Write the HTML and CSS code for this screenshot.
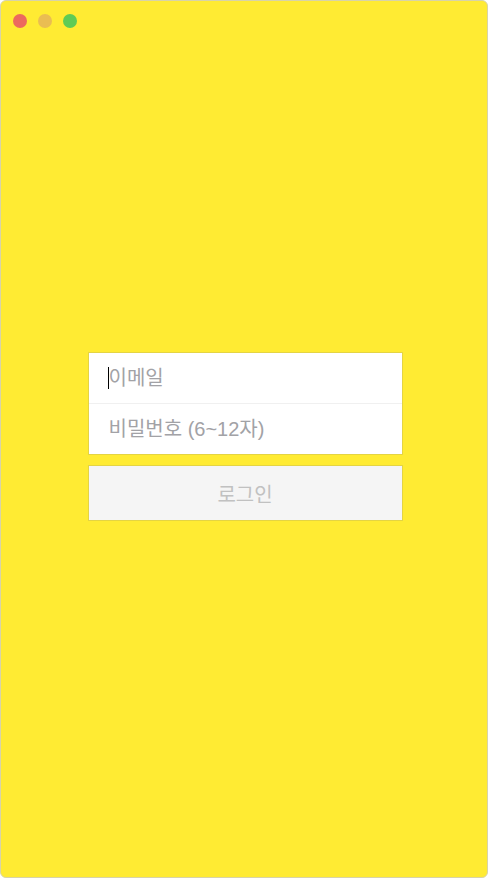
FILE: index.html
```html
<!DOCTYPE html>
<html lang="ko">
<head>
<meta charset="utf-8">
<title>로그인</title>
<link rel="stylesheet" href="styles.css">
</head>
<body>
<div class="window">
  <div class="titlebar">
    <span class="dot red"></span>
    <span class="dot yellow"></span>
    <span class="dot green"></span>
  </div>
  <main class="content">
    <form class="login">
      <div class="fields">
        <label class="field-wrap">
          <input class="field" type="email" placeholder="이메일">
          <span class="caret"></span>
        </label>
        <label class="field-wrap second">
          <input class="field" type="password" placeholder="비밀번호 (6~12자)">
        </label>
      </div>
      <button class="submit" type="button" disabled>로그인</button>
    </form>
  </main>
</div>
</body>
</html>
```
FILE: styles.css
```css
* { box-sizing: border-box; }
html, body { margin: 0; padding: 0; background: #ffffff; }
body {
  width: 488px;
  height: 878px;
  font-family: "Liberation Sans", "Noto Sans CJK KR", sans-serif;
}
.window {
  width: 488px;
  height: 878px;
  background: #ffeb33;
  border: 1px solid #d8d3a8;
  border-radius: 6px;
  display: flex;
  flex-direction: column;
  overflow: hidden;
}
.titlebar {
  display: flex;
  gap: 11px;
  padding: 13px 0 0 12px;
  height: 28px;
}
.dot {
  width: 14px;
  height: 14px;
  border-radius: 50%;
}
.red { background: #ec6a5e; }
.yellow { background: #eabd52; }
.green { background: #5fcb55; }
.content {
  flex: 1;
  display: flex;
  justify-content: center;
  padding-top: 323px;
}
.login {
  width: 315px;
  display: flex;
  flex-direction: column;
  gap: 10px;
  margin-left: 2px;
}
.fields {
  border: 1px solid #e4d443;
  background: #ffffff;
  display: flex;
  flex-direction: column;
}
.field-wrap {
  position: relative;
  display: flex;
  height: 50px;
}
.field-wrap.second {
  height: 51px;
  border-top: 1px solid #f0f0f0;
}
.field {
  flex: 1;
  width: 100%;
  border: 0;
  outline: none;
  padding: 0 0 0 20px;
  font-family: "Liberation Sans", "Noto Sans CJK KR", sans-serif;
  font-size: 20px;
  color: #333;
  background: #ffffff;
}
.field::placeholder {
  color: #a2a2a6;
}
.caret {
  position: absolute;
  left: 19px;
  top: 14px;
  width: 1px;
  height: 22px;
  background: #000;
}
.submit {
  height: 56px;
  border: 1px solid #e4d443;
  background: #f5f5f5;
  color: #c1c1c1;
  font-family: "Liberation Sans", "Noto Sans CJK KR", sans-serif;
  font-size: 20px;
  padding: 0;
}
```
